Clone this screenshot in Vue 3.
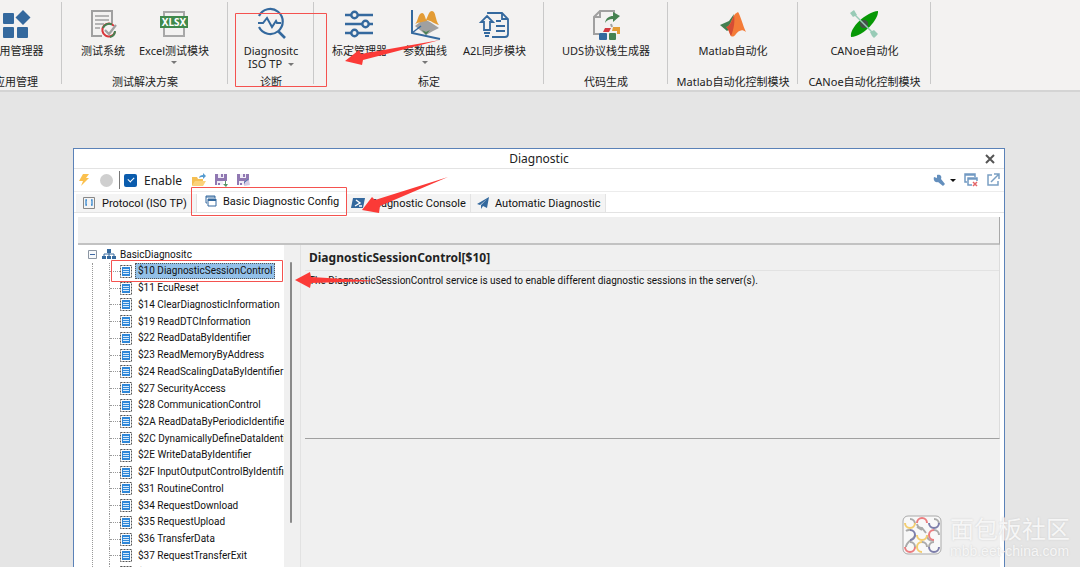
<script setup>
import { ref } from 'vue'

const enabled = ref(true)
const selected = ref('$10')

const groups = [
  { key: 'app', title: '应用管理', items: [{ icon: 'apps', label: '应用管理器' }] },
  {
    key: 'test',
    title: '测试解决方案',
    items: [
      { icon: 'report', label: '测试系统' },
      { icon: 'xlsx', label: 'Excel测试模块', menu: true }
    ]
  },
  { key: 'diag', title: '诊断', items: [{ icon: 'diagnose', label: 'Diagnositc', second: 'ISO TP' }] },
  {
    key: 'calib',
    title: '标定',
    items: [
      { icon: 'sliders', label: '标定管理器' },
      { icon: 'surface', label: '参数曲线', menu: true },
      { icon: 'a2l', label: 'A2L同步模块' }
    ]
  },
  { key: 'code', title: '代码生成', items: [{ icon: 'uds', label: 'UDS协议栈生成器' }] },
  { key: 'matlab', title: 'Matlab自动化控制模块', items: [{ icon: 'matlab', label: 'Matlab自动化' }] },
  { key: 'canoe', title: 'CANoe自动化控制模块', items: [{ icon: 'canoe', label: 'CANoe自动化' }] }
]

const services = [
  ['$10', 'DiagnosticSessionControl'],
  ['$11', 'EcuReset'],
  ['$14', 'ClearDiagnosticInformation'],
  ['$19', 'ReadDTCInformation'],
  ['$22', 'ReadDataByIdentifier'],
  ['$23', 'ReadMemoryByAddress'],
  ['$24', 'ReadScalingDataByIdentifier'],
  ['$27', 'SecurityAccess'],
  ['$28', 'CommunicationControl'],
  ['$2A', 'ReadDataByPeriodicIdentifier'],
  ['$2C', 'DynamicallyDefineDataIdentifier'],
  ['$2E', 'WriteDataByIdentifier'],
  ['$2F', 'InputOutputControlByIdentifier'],
  ['$31', 'RoutineControl'],
  ['$34', 'RequestDownload'],
  ['$35', 'RequestUpload'],
  ['$36', 'TransferData'],
  ['$37', 'RequestTransferExit'],
  ['$38', 'RequestFileTransfer']
]
</script>

<template>
  <div class="page">
    <header class="ribbon">
      <section v-for="g in groups" :key="g.key" class="group" :class="'g-' + g.key">
        <div class="items">
          <button v-for="it in g.items" :key="it.icon" type="button" class="item">
            <svg class="big" viewBox="0 0 32 32" aria-hidden="true">
              <g v-if="it.icon === 'apps'" fill="#34699e">
                <rect x="3" y="5" width="11" height="11" rx="1" />
                <rect x="3" y="19" width="11" height="11" rx="1" />
                <rect x="17" y="19" width="11" height="11" rx="1" />
                <path d="M23 2l7.500 7.500L23 17l-7.500-7.500z" />
              </g>
              <g v-else-if="it.icon === 'report'" fill="none">
                <path d="M15 28H5V3h20v12" stroke="#a0a0a0" stroke-width="2" />
                <path d="M8 8h14M8 12h14M8 16h9M8 20h5" stroke="#a0a0a0" stroke-width="1.500" />
                <path d="M27 18a6.500 6.500 0 1 0 1 6" stroke="#d9363b" stroke-width="2" />
                <path d="M16 20a6.500 6.500 0 0 1 9-3.500M23 29a6.500 6.500 0 0 0 5-6" stroke="#468152" stroke-width="2" />
                <path d="M18 22l4 4 7-9" stroke="#a0a0a0" stroke-width="2.200" />
              </g>
              <g v-else-if="it.icon === 'xlsx'">
                <path d="M6 9V4h20v5M6 20v8h20v-8" fill="none" stroke="#a8a8a8" stroke-width="2" />
                <rect x="2" y="8" width="28" height="12" fill="#408a4c" />
                <text x="16" y="18" text-anchor="middle" class="xlsx">XLSX</text>
              </g>
              <g v-else-if="it.icon === 'diagnose'" fill="none" stroke="#34699e" stroke-width="2.200">
                <path d="M4 8A12.500 12.500 0 1 1 4 19" />
                <path d="M23 23l7 7" stroke-width="2.600" />
                <path d="M3 15h5l4-5 5 9 4-6 1 2h4" stroke-width="2" />
              </g>
              <g v-else-if="it.icon === 'sliders'" fill="none" stroke="#34699e" stroke-width="2.400">
                <path d="M2 7h6M15 7h15M2 16h17M26 16h4M2 25h6M15 25h15" />
                <circle cx="11.500" cy="7" r="3.200" />
                <circle cx="22.500" cy="16" r="3.200" />
                <circle cx="11.500" cy="25" r="3.200" />
              </g>
              <g v-else-if="it.icon === 'surface'">
                <path d="M6 18l9-7 6 3 9 6-6 3-7 4z" fill="#a0a0a0" />
                <path d="M13 22l4 5 4-5-4 2z" fill="#4a8254" />
                <path d="M6 16c3-2 3-11 7-11 3 0 3 6 5 8-4 1-8 1-12 3zM17 12c2-4 3-9 6-9 4 0 3 9 7 14-5-1-8-5-13-5z" fill="#e39c35" />
                <path d="M3 2v23l28 6" fill="none" stroke="#34699e" stroke-width="2" />
                <path d="M3 25l9-7" stroke="#34699e" stroke-width="1.500" />
              </g>
              <g v-else-if="it.icon === 'a2l'" fill="none" stroke="#34699e" stroke-width="1.800">
                <path d="M9 6V5h14l6 6v15q0 3-3 3H13M23 5v6h6" />
                <path d="M8 8l6 6h-3v8H5v-8H2zM5 25h6M6 28h4M17 13h5M17 18h9M17 23h9" />
              </g>
              <g v-else-if="it.icon === 'uds'">
                <path d="M4 27V9l6-6h14v4M10 3v6H4M4 26h5" fill="none" stroke="#a0a0a0" stroke-width="2" />
                <path d="M15 15c1-5 4-7 8-7V4l7 4-7 6v-3c-4 0-6 1-8 4z" fill="#458251" />
                <path d="M21 16l1 3" stroke="#a0a0a0" stroke-width="2" />
                <path d="M15 20h6l-2 4h-6z" fill="#d23940" />
                <path d="M23 19h7v7h-3v-3h-5z" fill="#e39c35" />
                <rect x="9" y="25" width="8" height="7" rx="1" fill="#34699e" />
                <rect x="19" y="25" width="7" height="7" rx="1" fill="#458251" />
              </g>
              <g v-else-if="it.icon === 'matlab'">
                <path d="M3 17l9-4 5-7-3 14-4 3z" fill="#437f50" />
                <path d="M9 19c4 0 5-7 9-13l3-2c2 2 5 14 8 20-5-4-8 0-10 2-2 3-4 3-5 2-2-3-2-7-5-9z" fill="#f47c38" />
                <path d="M9 19c4 0 6-7 8-12 1 6 0 14-3 21-2-3-2-7-5-9z" fill="#d64c35" />
              </g>
              <g v-else>
                <path d="M30 3c1 8-14 25-27 26C1 20 18 4 30 3z" fill="#079806" />
                <circle cx="16" cy="16" r="4" fill="#45504a" />
                <path d="M4 4l24 24" stroke="#98cbb6" stroke-width="1.500" />
                <path d="M2 5l4-3 3 5-4 2zM22 24l4-2 4 4-4 4-2-2z" fill="#98cbb6" />
              </g>
            </svg>
            <span>{{ it.label }}</span>
            <span v-if="it.second" class="second">{{ it.second }} <i class="caret"></i></span>
            <i v-if="it.menu" class="caret"></i>
          </button>
        </div>
        <div class="group-title">{{ g.title }}</div>
      </section>
    </header>

    <main class="window">
      <div class="titlebar">
        <h1>Diagnostic</h1>
        <button type="button" class="close" aria-label="Close">
          <svg viewBox="0 0 10 10" width="10" height="10"><path d="M1 1l8 8M9 1l-8 8" stroke="#555" stroke-width="2" /></svg>
        </button>
      </div>

      <div class="toolbar">
        <button type="button" aria-label="Connect">
          <svg viewBox="0 0 14 14" width="14" height="14"><path d="M5 1h6L8 5h3L3 13l2-5H1z" fill="#fbc04d" /></svg>
        </button>
        <span class="lamp"></span>
        <label class="enable"><input v-model="enabled" type="checkbox" />Enable</label>
        <button type="button" aria-label="Open">
          <svg viewBox="0 0 14 14" width="14" height="14">
            <path d="M0 13V4h5l1 2h5v2H4z" fill="#f5bf54" /><path d="M3 8h11l-3 5H0z" fill="#fbd27c" />
            <path d="M7 5c0-2 2-3 4-3V0l3 3-3 3V4C9 4 8 4 7 5z" fill="#559bd0" />
          </svg>
        </button>
        <button type="button" aria-label="Save">
          <svg viewBox="0 0 14 14" width="14" height="14">
            <path d="M1 1h12v11H1z" fill="#9078b2" /><path d="M4 1h6v4H4zM3 8h6v4H3z" fill="#f1edf7" /><path d="M7 1h2v3H7zM4 10h2v2H4z" fill="#9078b2" />
            <path d="M9 8h5v5H9z" fill="#fff" /><path d="M11 8h1v3h2l-2 3-3-3h2z" fill="#5a9468" />
          </svg>
        </button>
        <button type="button" aria-label="Save as">
          <svg viewBox="0 0 14 14" width="14" height="14">
            <path d="M1 1h12v7l-5 4H1z" fill="#9078b2" /><path d="M4 1h6v4H4zM3 8h5v4H3z" fill="#f1edf7" /><path d="M7 1h2v3H7zM4 10h2v2H4z" fill="#9078b2" />
            <path d="M8 13l1-4 4-2 1 5z" fill="#d6cce6" /><path d="M8 10l4-4" stroke="#527fb5" />
          </svg>
        </button>
        <span class="spacer"></span>
        <button type="button" class="wrench" aria-label="Settings">
          <svg viewBox="0 0 12 12" width="12" height="12"><path d="M1 3l3 1V1c4-1 5 2 4 4l4 5-2 2-5-4C2 9 0 6 1 3z" fill="#648fbd" /></svg>
          <i class="caret dark"></i>
        </button>
        <button type="button" aria-label="Close windows">
          <svg viewBox="0 0 14 14" width="14" height="14" fill="none">
            <path d="M3 9H1V1h10v3M1 2h10" stroke="#7199c2" stroke-width="1.500" /><path d="M4 5h9v7H4zM4 6h9" stroke="#7199c2" stroke-width="1.500" />
            <path d="M8 8h6v6H8z" fill="#fff" /><path d="M9 9l4 4M13 9l-4 4" stroke="#e56569" stroke-width="1.500" />
          </svg>
        </button>
        <button type="button" aria-label="Detach">
          <svg viewBox="0 0 14 14" width="14" height="14" fill="none" stroke="#7ba0c4" stroke-width="1.500">
            <path d="M6 2H2v10h10V8M8 1h5v5M13 1L5 9" />
          </svg>
        </button>
      </div>

      <nav class="tabs" role="tablist">
        <button type="button" role="tab" class="tab t1">
          <svg viewBox="0 0 14 12" width="14" height="12" fill="none"><path d="M1.500.5h11v11h-11z" stroke="#888" /><path d="M5 3H4v5h1M9 3h1v5H9" stroke="#3989cf" stroke-width="1.300" /></svg>
          Protocol (ISO TP)
        </button>
        <button type="button" role="tab" class="tab t2 active" aria-selected="true">
          <svg viewBox="0 0 12 12" width="12" height="12" fill="none" stroke="#34699e">
            <path d="M2 8H1V1h9v2M1 2h9M3 4h8v7H3z" /><path d="M3 5h8" stroke-width="2" />
          </svg>
          Basic Diagnostic Config
        </button>
        <button type="button" role="tab" class="tab t3">
          <svg viewBox="0 0 14 12" width="14" height="12"><path d="M2 1h12l-2 10H0z" fill="#34699e" /><path d="M5 3l4 3-5 3M8 9h3" fill="none" stroke="#fff" stroke-width="1.400" /></svg>
          Diagnostic Console
        </button>
        <button type="button" role="tab" class="tab t4">
          <svg viewBox="0 0 12 12" width="12" height="12"><path d="M0 7l12-7-2 11-4-2-2 3V8l6-6-7 6z" fill="#34699e" /></svg>
          Automatic Diagnostic
        </button>
      </nav>

      <div class="strip"></div>

      <div class="body">
        <div class="tree-pane">
          <div class="tree">
            <div class="root">
              <svg viewBox="0 0 9 9" width="9" height="9"><path d="M.5.5h8v8h-8z" fill="#f7f9fb" stroke="#8c96a3" /><path d="M2 4.500h5" stroke="#3f69a5" /></svg>
              <svg class="org" viewBox="0 0 14 12" width="14" height="12"><path d="M5 1h4v4H5zM0 8h4v3H0zM5 8h4v3H5zM10 8h4v3h-4z" fill="#34699e" /><path d="M7 4v4M2 8V6h10v2" fill="none" stroke="#34699e" /></svg>
              <span>BasicDiagnositc</span>
            </div>
            <ul>
              <li v-for="s in services" :key="s[0]">
                <button type="button" class="node" :class="{ on: selected === s[0] }" @click="selected = s[0]">
                  <svg viewBox="0 0 12 13" width="12" height="13" fill="none">
                    <path d="M.5.5h11v12H.5z" stroke="#555" stroke-dasharray="2 1" />
                    <path d="M2 2h8v9H2z" fill="#2f87d8" /><path d="M3 4.500h6M3 6.500h6M3 8.500h6" stroke="#d7ebfc" />
                  </svg>
                  <span>{{ s[0] }} {{ s[1] }}</span>
                </button>
              </li>
            </ul>
          </div>
          <div class="scroll"><div class="thumb"></div></div>
        </div>
        <section class="detail">
          <h2>DiagnosticSessionControl[$10]</h2>
          <p>The DiagnosticSessionControl service is used to enable different diagnostic sessions in the server(s).</p>
        </section>
      </div>
    </main>

    <svg class="marks" width="460" height="300" viewBox="0 0 460 300" aria-hidden="true">
      <g fill="none" stroke="#f4524f">
        <path d="M235.500 13.500h91v73h-91zM191.500 187.500h155v28h-155zM111.500 260.500h171v21h-171z" />
      </g>
      <g fill="#fb3a37">
        <path d="M345 61l14-11 2 4 79-14-77 20-1 5z" />
        <path d="M362 210l10-13 3 3 73-23-68 29-1 7z" />
        <path d="M295 280l15-8 1 5 67 4-67 2-1 5z" />
      </g>
    </svg>

    <div class="watermark">
      <svg viewBox="0 0 40 40" width="40" height="40" fill="none" stroke-width="2">
        <rect x="1" y="1" width="38" height="38" rx="5" fill="#f8f8f8" stroke="#aaa" stroke-width="1" />
        <path d="M8 4a5 5 0 0 1 5 5M15 9a5 5 0 0 0 5 4l4 5M32 4a5 5 0 0 1 5 5M4 16a5 5 0 0 1 4-1M13 20c0 4-9 6-9 12M20 15l-5-3M25 20c0 4 3 6 7 6M32 15a5 5 0 0 1 5 5M8 27a5 5 0 0 1 5 5M20 27a5 5 0 0 1 5 5M27 32a5 5 0 0 1 5-5" stroke="#aaa" />
        <path d="M3 8a5 5 0 0 0 10 0M15 20a5 5 0 0 0 10 0M20 37a5 5 0 0 1 0-10" stroke="#f3cd70" />
        <path d="M15 8a5 5 0 0 1 10 0M32 25a5 5 0 0 1 0-10M3 32a5 5 0 0 0 10 0" stroke="#eb7d7f" />
        <path d="M27 8a5 5 0 0 0 10 0M8 15a5 5 0 0 1 0 10M27 32a5 5 0 0 0 10 0" stroke="#7d7eaa" />
      </svg>
      <div>
        <strong>面包板社区</strong>
        <span>mbb.eet-china.com</span>
      </div>
    </div>
  </div>
</template>

<style>
body {
  overflow: hidden;
}
</style>

<style scoped>
.page {
  position: relative;
  box-sizing: border-box;
  height: 100vh;
  display: flex;
  flex-direction: column;
  overflow: hidden;
  background: #e5e5e5;
  color: #222;
  font-family: "Noto Sans", "Noto Sans CJK SC", sans-serif;
  font-size: 11px;
}
button {
  border: 0;
  padding: 0;
  background: none;
  font: inherit;
  color: inherit;
}
svg {
  flex: none;
}
.ribbon {
  flex: none;
  display: flex;
  height: 90px;
  background: #f3f2f1;
  border-bottom: 2px solid #d4d4d4;
}
.group {
  flex: none;
  box-sizing: border-box;
  display: flex;
  flex-direction: column;
  background: linear-gradient(#c9c9c9, #c9c9c9) right 2px / 1px 82px no-repeat;
}
.g-app { width: 92px; margin-left: -30px; }
.g-test { width: 166px; }
.g-diag { width: 86px; }
.g-calib { width: 230px; }
.g-code { width: 124px; }
.g-matlab { width: 130px; }
.g-canoe { width: 133px; }
.items {
  flex: none;
  display: flex;
  justify-content: center;
  gap: 14px;
  height: 73px;
}
.g-calib .items { gap: 16px; }
.item {
  display: flex;
  flex-direction: column;
  align-items: center;
  padding-top: 8px;
  line-height: 14px;
  white-space: nowrap;
}
.big {
  width: 32px;
  height: 32px;
  margin-bottom: 4px;
  overflow: visible;
}
.xlsx {
  font: bold 10px "Noto Sans", sans-serif;
  fill: #fff;
}
.second { line-height: 12px; }
.caret {
  display: inline-block;
  border: 3px solid transparent;
  border-top-color: #777;
  border-bottom: 0;
  margin-top: 3px;
}
.second .caret {
  margin: 0 0 2px 3px;
}
.caret.dark { border-top-color: #111; margin: 0; }
.group-title {
  line-height: 17px;
  text-align: center;
  white-space: nowrap;
}
.window {
  flex: 1;
  min-height: 0;
  display: flex;
  flex-direction: column;
  margin: 56px 75px 0 73px;
  border: 1px solid #5b82b8;
  border-bottom: 0;
  background: #fff;
  overflow: hidden;
}
.titlebar {
  flex: none;
  display: grid;
  grid-template-columns: 28px 1fr 28px;
  height: 19px;
  border-bottom: 1px solid #e3e3e3;
}
h1 {
  grid-column: 2;
  margin: 0;
  text-align: center;
  font-size: 12px;
  font-weight: 400;
  line-height: 19px;
}
.close svg { display: block; margin: 1px auto 0; }
.toolbar {
  flex: none;
  display: flex;
  align-items: center;
  gap: 8px;
  height: 22px;
  padding: 0 4px;
  border-bottom: 1px solid #ececec;
}
.toolbar svg { display: block; }
.lamp {
  width: 13px;
  height: 13px;
  border-radius: 50%;
  background: #cfcfcf;
}
.enable {
  display: flex;
  align-items: center;
  gap: 7px;
  height: 18px;
  margin-left: -2px;
  margin-right: 2px;
  padding-left: 4px;
  border-left: 1px solid #777;
  font-size: 12px;
}
.enable input {
  appearance: none;
  position: relative;
  width: 13px;
  height: 13px;
  margin: 0;
  border-radius: 2px;
  background: #0b5cad;
}
.enable input:checked::after {
  content: "";
  position: absolute;
  left: 4px;
  top: 3px;
  width: 5px;
  height: 3px;
  border: solid #fff;
  border-width: 0 0 1px 1px;
  transform: rotate(-45deg);
}
.spacer { flex: 1; }
.wrench { display: flex; align-items: center; gap: 5px; }
.tabs {
  flex: none;
  display: flex;
  align-items: flex-end;
  height: 20px;
  padding-left: 2px;
  border-bottom: 1px solid #e3e3e3;
  font-family: Roboto, sans-serif;
  color: #111;
}
.tab {
  box-sizing: border-box;
  display: flex;
  align-items: center;
  gap: 6px;
  height: 18px;
  padding-left: 6px;
  background: #f4f4f4;
  border-right: 1px solid #e3e3e3;
  white-space: nowrap;
}
.t1 { width: 121px; }
.t2 { width: 150px; padding-left: 8px; }
.t3 { width: 124px; padding-left: 4px; }
.t4 { width: 135px; }
.tab.active { height: 20px; background: #fff; padding-bottom: 2px; }
.strip {
  flex: none;
  height: 26px;
  margin: 4px 4px 0;
  background: #efefef;
  border-right: 1px solid #a8a8a8;
  border-bottom: 2px solid #c2c2c2;
}
.body {
  flex: 1;
  min-height: 0;
  display: flex;
  margin: 0 4px;
  background: #f0f0f0;
}
.tree-pane {
  flex: none;
  display: flex;
  width: 222px;
  border-right: 1px solid #e2e2e2;
}
.tree {
  width: 206px;
  background: #fff;
  overflow: hidden;
}
.tree,
p {
  font-family: Roboto, sans-serif;
  font-size: 10px;
  color: #111;
}
.root {
  display: flex;
  align-items: center;
  gap: 4px;
  height: 18px;
  padding-left: 10px;
}
.org { margin-left: 1px; }
ul {
  list-style: none;
  margin: 0 0 0 14px;
  padding: 0 0 0 16px;
  height: 318px;
  display: grid;
  grid-template-rows: repeat(19, 1fr);
  border-left: 1px dotted #999;
}
li {
  display: flex;
  min-height: 0;
  border-left: 1px dotted #999;
}
.node {
  display: flex;
  align-items: center;
  white-space: nowrap;
}
.node::before {
  content: "";
  width: 10px;
  border-top: 1px dotted #999;
}
.node span {
  margin-left: 3px;
  padding: 0 2px;
  line-height: 14px;
  border: 1px solid transparent;
}
.node.on span {
  background: #93c0e8;
  border: 1px dotted #555;
}
.scroll {
  flex: 1;
  padding: 17px 0 0 6px;
}
.thumb {
  width: 2px;
  height: 261px;
  border-radius: 1px;
  background: #8a8a8a;
}
.detail {
  flex: 1;
  min-width: 0;
  height: 193px;
  margin-left: 4px;
  border-right: 1px solid #dcdcdc;
  border-bottom: 1px solid #a0a0a0;
}
h2 {
  margin: 0;
  padding-left: 4px;
  border-bottom: 1px solid #e2e2e2;
  font-size: 12px;
  line-height: 25px;
}
p {
  margin: 0;
  padding-left: 4px;
  line-height: 19px;
}
.marks {
  position: absolute;
  left: 0;
  top: 0;
  pointer-events: none;
}
.watermark {
  position: absolute;
  right: 10px;
  bottom: 8px;
  display: flex;
  gap: 8px;
  color: #f6f6f6;
  text-shadow: 0 0 2px #ccc;
}
.watermark strong,
.watermark span {
  display: block;
}
.watermark strong {
  font-size: 24px;
  font-weight: 400;
  line-height: 28px;
}
.watermark span {
  font: 14px/16px "Liberation Sans", sans-serif;
}
</style>
